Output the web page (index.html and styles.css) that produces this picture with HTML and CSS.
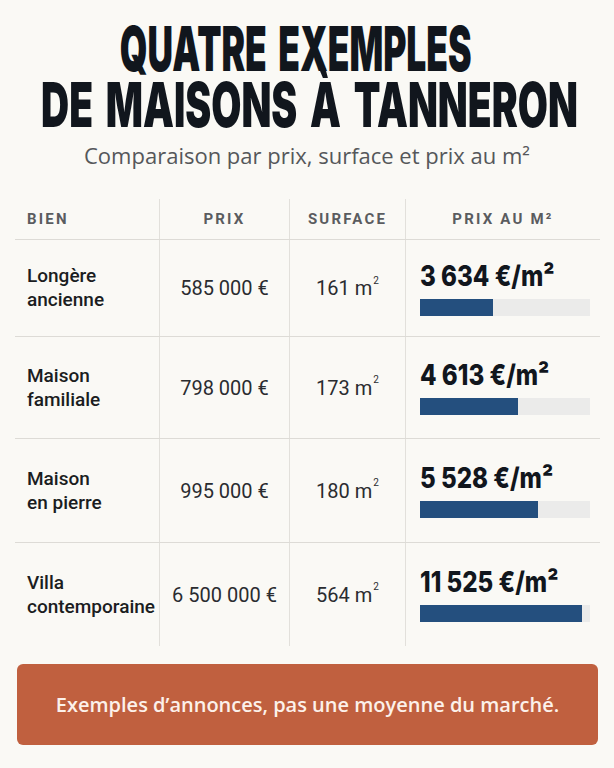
FILE: index.html
```html
<!DOCTYPE html>
<html lang="fr">
<head>
<meta charset="utf-8">
<title>Quatre exemples de maisons à Tanneron</title>
<link rel="stylesheet" href="styles.css">
</head>
<body>
<main class="page">
  <header class="head">
    <h1 class="title"><span class="line l1">QUATRE EXEMPLES</span><span class="line l2">DE MAISONS À TANNERON</span></h1>
    <p class="sub">Comparaison par prix, surface et prix au m²</p>
  </header>

  <section class="table">
    <div class="row th">
      <div class="cell name-h">BIEN</div>
      <div class="cell">PRIX</div>
      <div class="cell">SURFACE</div>
      <div class="cell">PRIX AU M²</div>
    </div>

    <div class="row tr r1">
      <div class="cell name">Longère<br>ancienne</div>
      <div class="cell price">585 000 €</div>
      <div class="cell area">161 m<sup>2</sup></div>
      <div class="cell ppm"><span class="big">3 634 €/m²</span><div class="bar"><div class="fill" style="width:73px"></div></div></div>
    </div>

    <div class="row tr r2">
      <div class="cell name">Maison<br>familiale</div>
      <div class="cell price">798 000 €</div>
      <div class="cell area">173 m<sup>2</sup></div>
      <div class="cell ppm"><span class="big">4 613 €/m²</span><div class="bar"><div class="fill" style="width:98px"></div></div></div>
    </div>

    <div class="row tr r3">
      <div class="cell name">Maison<br>en pierre</div>
      <div class="cell price">995 000 €</div>
      <div class="cell area">180 m<sup>2</sup></div>
      <div class="cell ppm"><span class="big">5 528 €/m²</span><div class="bar"><div class="fill" style="width:118px"></div></div></div>
    </div>

    <div class="row tr r4">
      <div class="cell name">Villa<br>contemporaine</div>
      <div class="cell price">6 500 000 €</div>
      <div class="cell area">564 m<sup>2</sup></div>
      <div class="cell ppm"><span class="big">11 525 €/m²</span><div class="bar"><div class="fill" style="width:162px"></div></div></div>
    </div>
  </section>

  <div class="note">Exemples d’annonces, pas une moyenne du marché.</div>
</main>
</body>
</html>
```

FILE: styles.css
```css
* { box-sizing: border-box; }

html, body {
  margin: 0;
  padding: 0;
  background: #faf9f5;
}

body {
  font-family: "Open Sans", "Noto Sans", sans-serif;
  color: #1c1e22;
  width: 614px;
  height: 768px;
  overflow: hidden;
}

.page {
  padding-top: 21px;
}

.title {
  margin: 0;
  display: flex;
  flex-direction: column;
  align-items: center;
  font-family: "Inter", "Liberation Sans", sans-serif;
  font-weight: 900;
  font-size: 62px;
  line-height: 56px;
  color: #11161d;
  word-spacing: 8px;
}

.line {
  display: block;
  white-space: nowrap;
  transform-origin: 50% 50%;
}

.l1 { transform: translateX(-11px) scaleX(0.57); }
.l2 { transform: translateX(2px) scaleX(0.628); }

.sub {
  margin: 9px 0 0;
  text-align: center;
  font-size: 22px;
  line-height: 26px;
  color: #55575a;
}

.table {
  margin: 31px 14px 0 15px;
}

.row {
  display: grid;
  grid-template-columns: 144px 130px 116px 1fr;
  border-bottom: 1.5px solid #dddbd6;
}

.row.r4 { border-bottom: none; }

.cell {
  display: flex;
  align-items: center;
  justify-content: center;
}

.cell + .cell {
  border-left: 1.5px solid #e2e0db;
}

.th {
  height: 41px;
}

.th .cell {
  font-family: "Roboto", "Open Sans", sans-serif;
  font-weight: 700;
  font-size: 15px;
  letter-spacing: 2.2px;
  color: #5a5c5f;
}

.th .name-h {
  justify-content: flex-start;
  padding-left: 12px;
}

.tr { height: 102px; }
.tr.r1 { height: 97px; }
.tr.r3 { height: 104px; }
.tr.r4 { height: 103px; }

.name {
  justify-content: flex-start;
  padding-left: 12px;
  font-family: "Roboto", "Open Sans", sans-serif;
  font-size: 19px;
  font-weight: 500;
  line-height: 24px;
  color: #1b1d21;
}

.price, .area {
  font-family: "Roboto", "Open Sans", sans-serif;
  font-size: 20px;
  color: #2a2c30;
}

.area sup {
  font-size: 10px;
  vertical-align: 0;
  position: relative;
  top: -8px;
  margin-left: 1px;
}

.ppm {
  flex-direction: column;
  align-items: flex-start;
  padding-left: 14px;
}

.big {
  display: block;
  font-family: "Inter", "Liberation Sans", sans-serif;
  font-weight: 800;
  font-size: 28px;
  line-height: 30px;
  color: #11161d;
  white-space: nowrap;
  transform: scaleX(0.86);
  transform-origin: 0 50%;
}

.bar {
  margin-top: 8px;
  width: 170px;
  height: 17px;
  background: #ebebea;
}

.fill {
  height: 100%;
  background: #244f7e;
}

.note {
  margin: 18px 16px 0 17px;
  height: 81px;
  border-radius: 6px;
  background: #c0603f;
  color: #fcf1ea;
  font-size: 20px;
  font-weight: 600;
  display: flex;
  align-items: center;
  justify-content: center;
}
```
